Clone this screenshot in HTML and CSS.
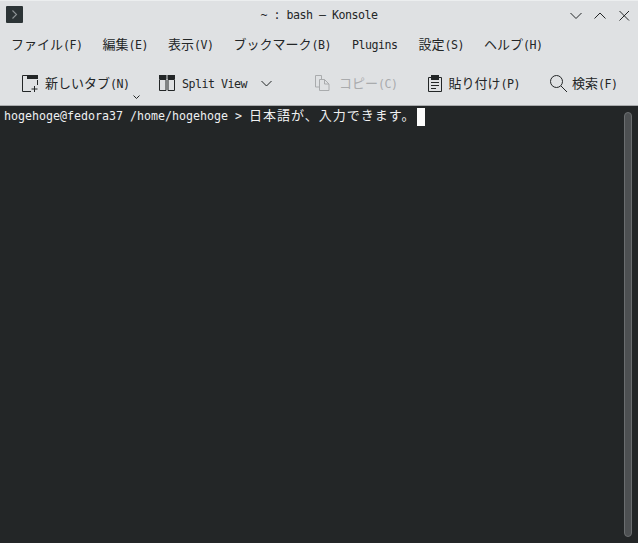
FILE: index.html
```html
<!DOCTYPE html>
<html lang="ja">
<head>
<meta charset="utf-8">
<title>~ : bash — Konsole</title>
<link rel="stylesheet" href="styles.css">
</head>
<body>
<div class="window">
  <header class="titlebar">
    <div class="app-icon">
      <svg width="17" height="17" viewBox="0 0 17 17"><path d="M6.500 4.500l4 4-4 4" fill="none" stroke="#8d9395" stroke-width="1.100"/></svg>
    </div>
    <div class="title">~ : bash — Konsole</div>
    <div class="win-buttons">
      <svg width="14" height="14" viewBox="0 0 14 14"><path d="M.5 4l5.500 5.500L11.500 4" class="ico"/></svg>
      <svg width="14" height="14" viewBox="0 0 14 14"><path d="M.5 9.500L6 4l5.500 5.500" class="ico"/></svg>
      <svg width="14" height="14" viewBox="0 0 14 14"><path d="M1.500 2l9.500 9.500M11 2l-9.500 9.500" class="ico"/></svg>
    </div>
  </header>
  <nav class="menubar">
    <span><span class="ja">ファイル</span>(F)</span>
    <span><span class="ja">編集</span>(E)</span>
    <span><span class="ja">表示</span>(V)</span>
    <span><span class="ja">ブックマーク</span>(B)</span>
    <span class="menu-plugins">Plugins</span>
    <span class="menu-settings"><span class="ja">設定</span>(S)</span>
    <span><span class="ja">ヘルプ</span>(H)</span>
  </nav>
  <div class="toolbar">
    <div class="tool tool-new">
      <svg width="16" height="17" viewBox="0 0 16 17"><path d="M.5 16.500V.5h10.500M15.500 5v5M.5 16.500H9" class="ico"/><rect x="5" y="0" width="11" height="4" fill="#232627"/><path d="M12.500 11v6M9.500 14h6" class="ico"/></svg>
      <span><span class="ja">新しいタブ</span>(N)</span>
      <svg class="mini-caret" width="7" height="4" viewBox="0 0 7 4"><path d="M.5.5l3 3 3-3" class="ico"/></svg>
    </div>
    <div class="tool tool-split">
      <svg width="16" height="16" viewBox="0 0 16 16"><path d="M.5 4.500V15.500H7V4.500zM9 4.500V15.500h6.500V4.500z" class="ico"/><path d="M0 0h7.500v4H0zM8.500 0H16v4H8.500z" fill="#232627"/></svg>
      <span class="split-label">Split View</span>
      <svg class="caret" width="11" height="7" viewBox="0 0 11 7"><path d="M.5 1l5 5 5-5" class="ico"/></svg>
    </div>
    <div class="tool tool-copy disabled">
      <svg width="15" height="16" viewBox="0 0 15 16"><path d="M.5.5h6V4M.5.5V12H4M4.500 4.500h5l4.500 4.500v6.500H4.500zM9.500 4.500V9H14" class="ico-dis"/></svg>
      <span><span class="ja">コピー</span>(C)</span>
    </div>
    <div class="tool tool-paste">
      <svg width="14" height="17" viewBox="0 0 14 17"><path d="M3 2.500H.5v14h13v-14H11" class="ico"/><rect x="3" y="0" width="8" height="5" fill="#232627"/><path d="M3 7.500h8M3 10.500h8M3 13.500h5" class="ico"/></svg>
      <span><span class="ja">貼り付け</span>(P)</span>
    </div>
    <div class="tool tool-find">
      <svg width="17" height="17" viewBox="0 0 17 17"><circle cx="6.500" cy="6.500" r="6" class="ico"/><path d="M11 11l6 6" class="ico"/></svg>
      <span><span class="ja">検索</span>(F)</span>
    </div>
  </div>
  <main class="terminal">
    <div class="screen"><span>hogehoge@fedora37 /home/hogehoge &gt; <span class="ja-term">日本語が、入力できます。</span></span><i class="cursor"></i></div>
    <div class="scrollbar"></div>
  </main>
</div>
</body>
</html>
```
FILE: styles.css
```css
* { box-sizing: border-box; }
html, body { margin: 0; height: 100%; }
body { background: #dfe1e3; overflow: hidden; }
.window {
  width: 638px;
  height: 543px;
  display: flex;
  flex-direction: column;
  background: #dfe1e3;
  color: #232627;
  font: 11.63px/16px "DejaVu Sans Mono", "Noto Sans CJK JP", monospace;
  letter-spacing: -0.5px;
}
.ja { font-size: 13px; letter-spacing: 0; font-family: "Noto Sans CJK JP", sans-serif; }
.ja-term { font-size: 13px; letter-spacing: 1px; font-family: "Noto Sans CJK JP", sans-serif; }
.ico { fill: none; stroke: #232627; stroke-width: 1; }
.ico-dis { fill: none; stroke: #a9abad; stroke-width: 1; }
.titlebar {
  height: 29px;
  flex: none;
  display: flex;
  align-items: center;
  padding: 1px 0 0 6px;
  position: relative;
  border-top: 1px solid #eceeef;
}
.app-icon {
  width: 17px;
  height: 17px;
  background: #2c3436;
  border-radius: 1px;
  margin-bottom: 2px;
  display: flex;
}
.title {
  position: absolute;
  left: 0;
  right: 0;
  text-align: center;
  top: 6px;
}
.win-buttons {
  margin-left: auto;
  display: flex;
  gap: 10px;
  padding-right: 6px;
}
.menubar {
  height: 31px;
  flex: none;
  display: flex;
  align-items: baseline;
  gap: 20px;
  padding: 7px 0 0 11px;
}
.menu-plugins { margin-left: 1px; }
.menu-settings { margin-left: 1px; }
.toolbar {
  height: 46px;
  flex: none;
  display: flex;
  align-items: center;
  padding-top: 1px;
  border-bottom: 1px solid #a9abad;
}
.tool { display: flex; align-items: center; flex: none; }
.tool-new { margin-left: 22px; gap: 7px; position: relative; width: 114px; }
.mini-caret { position: absolute; left: 111px; top: 20px; }
.tool-split { margin-left: 23px; gap: 7px; }
.split-label { margin-top: 1px; }
.caret { margin-left: 7px; margin-top: 1px; }
.tool-copy { margin-left: 43px; gap: 9px; }
.disabled { color: #a9abad; }
.tool-paste { margin-left: 30px; gap: 7px; }
.tool-find { margin-left: 30px; gap: 5px; }
.terminal {
  flex: 1;
  background: #232627;
  color: #eff0f1;
  display: flex;
  justify-content: space-between;
  padding: 1px 6px 6px 4px;
  letter-spacing: 0;
}
.screen { display: flex; align-items: flex-start; }
.cursor {
  display: block;
  width: 8px;
  height: 18px;
  background: #fcfcfc;
  margin: 1px 0 0 2px;
}
.scrollbar {
  width: 8px;
  margin-top: 5px;
  background: #4d5052;
  border: 1px solid #6b6e70;
  border-radius: 4px;
}
```
